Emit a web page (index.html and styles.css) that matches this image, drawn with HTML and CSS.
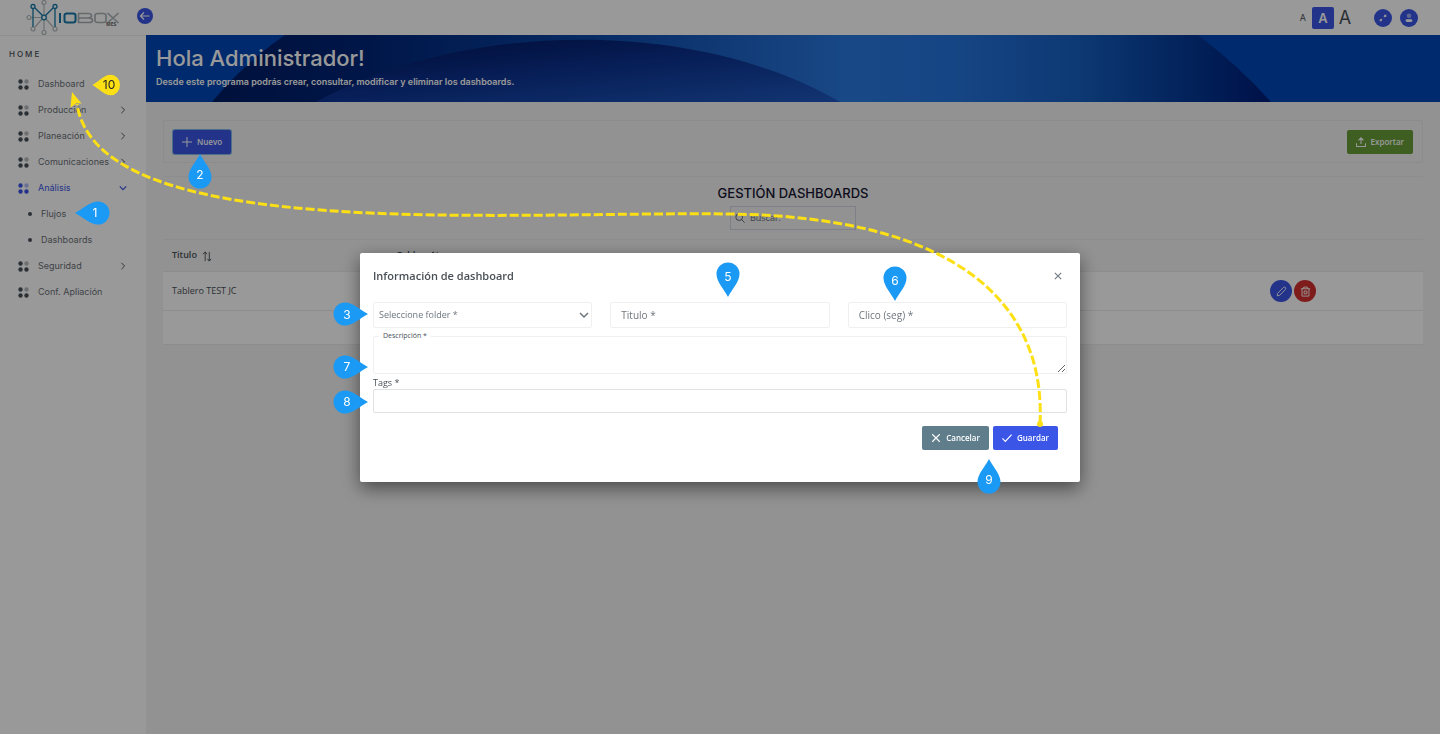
FILE: index.html
```html
<!DOCTYPE html>
<html lang="es">
<head>
<meta charset="utf-8">
<title>Iobox - Dashboards</title>
<link rel="stylesheet" href="styles.css">
</head>
<body>
<svg class="defs" aria-hidden="true">
  <symbol id="grid" viewBox="0 0 10 10"><circle cx="2.3" cy="2.3" r="2"/><circle cx="7.7" cy="2.3" r="2" opacity=".4"/><circle cx="2.3" cy="7.7" r="2"/><circle cx="7.7" cy="7.7" r="2"/></symbol>
  <symbol id="chev" viewBox="0 0 10 10"><path d="M3 1l4 4-4 4" fill="none" stroke="currentColor" stroke-width="1.2"/></symbol>
  <symbol id="down" viewBox="0 0 10 10"><path d="M1 3l4 4 4-4" fill="none" stroke="currentColor" stroke-width="1.5"/></symbol>
  <symbol id="sort" viewBox="0 0 10 12"><path d="M3 11V1M.5 3.5L3 1l2 2.5M7.5 1v10M5.500 8.500L7.500 11l2-2.500" fill="none" stroke="currentColor"/></symbol>
</svg>
<div class="app">
  <header class="topbar">
    <svg class="logo" viewBox="0 0 96 36" role="img" aria-label="Iobox MES">
      <g fill="none" stroke="#b4babd" stroke-width="1.200">
        <path d="M18 5v10M18 20v11M5 17.500h11M16 19L9 27M20 19l7 8"/>
        <circle cx="18" cy="2.500" r="2"/><circle cx="3" cy="17.500" r="2"/><circle cx="7" cy="29" r="2"/><circle cx="18" cy="32.500" r="2"/><circle cx="29" cy="29" r="2"/>
      </g>
      <g fill="none" stroke="#1479a8" stroke-width="1.300">
        <path d="M7 9v18M9 8l8 8M19 16l8-8M29 9v18"/><circle cx="7" cy="6.500" r="2"/><circle cx="29" cy="6.500" r="2"/><circle cx="18" cy="17.500" r="2.300"/>
      </g>
      <path d="M34 13v10M40 13.500h7q2.500 0 2.500 2v5q0 2-2.500 2h-6q-2.500 0-2.500-2v-5q0-2 2.500-2" fill="none" stroke="#1479a8" stroke-width="2"/>
      <path d="M52 13.500h10q3.500 0 3.500 2.200T62 18H53h10q3.500 0 3.500 2.300T63 22.500H52.500V13.500M71 13.500h6q3 0 3 2v5q0 2-3 2h-5q-3 0-3-2v-5q0-2 3-2M81.500 13l11 10M92.500 13l-11 10" fill="none" stroke="#a9b0b4" stroke-width="1.600"/>
      <text x="80" y="26" class="logo-sub">MES</text>
    </svg>
    <button class="round back" aria-label="Ocultar menú"><svg viewBox="0 0 16 16"><path d="M12.500 8h-9M7 4.500L3.500 8 7 11.500" fill="none" stroke="currentColor" stroke-width="1.200"/></svg></button>
    <div class="tools">
      <button class="size s1">A</button><button class="size s2">A</button><button class="size s3">A</button>
      <button class="round full" aria-label="Pantalla completa"><svg viewBox="0 0 16 16"><path d="M5.500 10.500l1.700-1.700M8.800 7.200l1.700-1.700M5.500 9v1.500H7M9 5.500h1.500V7" fill="none" stroke="currentColor" stroke-width=".9"/></svg></button>
      <button class="round" aria-label="Usuario"><svg viewBox="0 0 16 16"><circle cx="8" cy="6" r="2" fill="currentColor" opacity=".5"/><rect x="5" y="9" width="6" height="2.500" rx="1.200" fill="currentColor"/></svg></button>
    </div>
  </header>
  <div class="body">
    <nav class="side">
      <h2>HOME</h2>
      <a href="#"><svg class="gi"><use href="#grid"/></svg><span>Dashboard</span></a>
      <a href="#"><svg class="gi"><use href="#grid"/></svg><span>Producción</span><svg class="ch"><use href="#chev"/></svg></a>
      <a href="#"><svg class="gi"><use href="#grid"/></svg><span>Planeación</span><svg class="ch"><use href="#chev"/></svg></a>
      <a href="#"><svg class="gi"><use href="#grid"/></svg><span>Comunicaciones</span><svg class="ch"><use href="#chev"/></svg></a>
      <a href="#" class="on"><svg class="gi"><use href="#grid"/></svg><span>Análisis</span><svg class="ch"><use href="#down"/></svg></a>
      <a href="#" class="sub"><i></i><span>Flujos</span></a>
      <a href="#" class="sub"><i></i><span>Dashboards</span></a>
      <a href="#"><svg class="gi"><use href="#grid"/></svg><span>Seguridad</span><svg class="ch"><use href="#chev"/></svg></a>
      <a href="#"><svg class="gi"><use href="#grid"/></svg><span>Conf. Apliación</span></a>
    </nav>
    <main>
      <section class="banner">
        <svg class="art" viewBox="0 0 1294 67" preserveAspectRatio="none" aria-hidden="true">
          <defs>
            <linearGradient id="g1"><stop offset="0" stop-color="#001c63"/><stop offset=".15" stop-color="#00267a"/><stop offset=".35" stop-color="#0c46a4"/><stop offset=".6" stop-color="#2a79e0"/><stop offset=".7" stop-color="#2674de"/><stop offset=".82" stop-color="#165fc0"/><stop offset=".92" stop-color="#053a98"/><stop offset="1" stop-color="#001c78"/></linearGradient>
            <linearGradient id="g2" x2=".9" y2="1"><stop offset="0" stop-color="#001358"/><stop offset=".5" stop-color="#0c3290"/><stop offset="1" stop-color="#1d56bc"/></linearGradient>
          </defs>
          <path d="M66 67Q98 28 139 0H1052Q1092 30 1125 67z" fill="url(#g1)"/>
          <path d="M170 67C320 -15 550 -17 694 67z" fill="url(#g2)"/>
        </svg>
        <h1>Hola Administrador!</h1>
        <p>Desde este programa podrás crear, consultar, modificar y eliminar los dashboards.</p>
      </section>
      <div class="content">
        <section class="bar">
          <button class="btn new"><svg viewBox="0 0 12 12"><path d="M6 0v12M0 6h12" fill="none" stroke="currentColor" stroke-width="1.200"/></svg>Nuevo</button>
          <button class="btn export"><svg viewBox="0 0 12 12"><path d="M.6 7.500v3.900h10.800V7.500M6 8.500V1M3 4l3-3 3 3" fill="none" stroke="currentColor" stroke-width="1.300"/></svg>Exportar</button>
        </section>
        <section class="list">
          <div class="caption">
            <h3>GESTIÓN DASHBOARDS</h3>
            <label class="search"><svg viewBox="0 0 12 12"><circle cx="5" cy="5" r="4" fill="none" stroke="currentColor"/><path d="M8 8l3.500 3.500" stroke="currentColor"/></svg><input type="text" placeholder="Buscar." aria-label="Buscar"></label>
          </div>
          <table>
            <thead><tr><th class="c1">Titulo <svg class="so"><use href="#sort"/></svg></th><th>Folder <svg class="so"><use href="#sort"/></svg></th><th class="c3"></th></tr></thead>
            <tbody>
              <tr><td>Tablero TEST JC</td><td></td><td><div class="acts">
                <button class="act" aria-label="Editar"><svg viewBox="0 0 12 12"><path d="M1.300 10.700l.5-2.800 6.400-6.400q1.200-.8 2 0t.2 2.100L4 10.200z" fill="none" stroke="currentColor"/></svg></button>
                <button class="act del" aria-label="Eliminar"><svg viewBox="0 0 12 12"><path d="M1 3h10M4 3V1.200h4V3M2.200 3v8h7.600V3M4.500 5.500h3v3h-3z" fill="none" stroke="currentColor"/></svg></button></div></td></tr>
              <tr class="empty"><td colspan="3"></td></tr>
            </tbody>
          </table>
        </section>
      </div>
    </main>
  </div>
</div>
<div class="mask">
  <form class="modal" role="dialog" aria-labelledby="mt">
    <div class="mhead"><h2 id="mt">Información de dashboard</h2><button type="button" class="x" aria-label="Cerrar"><svg viewBox="0 0 10 10"><path d="M1 1l8 8M9 1L1 9" stroke="currentColor" stroke-width="1.300"/></svg></button></div>
    <div class="row">
      <div class="sel"><select aria-label="Seleccione folder"><option>Seleccione folder *</option></select><svg><use href="#down"/></svg></div>
      <input type="text" placeholder="Titulo *" aria-label="Titulo">
      <input type="text" placeholder="Clico (seg) *" aria-label="Clico (seg)">
    </div>
    <div class="area"><label for="desc">Descripción *</label><textarea id="desc"></textarea></div>
    <label class="tl" for="tags">Tags *</label>
    <input id="tags" class="tags" type="text">
    <div class="foot">
      <button type="button" class="btn cancel"><svg viewBox="0 0 12 12"><path d="M1.500 1.500l9 9M10.500 1.500l-9 9" stroke="currentColor" stroke-width="1.400"/></svg>Cancelar</button>
      <button type="button" class="btn save"><svg viewBox="0 0 12 12"><path d="M.5 6.500l3.500 3.500 7.500-8" fill="none" stroke="currentColor" stroke-width="1.400"/></svg>Guardar</button>
    </div>
  </form>
</div>
<svg class="notes" viewBox="0 0 1440 734">
  <defs><path id="pin" d="M0 -22C4 -14 11.500 -7 11.500 1A11.500 11.500 0 0 1 -11.500 1C-11.500 -7 -4 -14 0 -22z"/></defs>
  <path class="wire" d="M1040 424C1046 306 960 217 730 214S98 244 77 104"/>
  <circle cx="1040" cy="424" r="3" fill="#fce015"/>
  <path d="M72 92l9.500 11.500-5-.5-6 4.500z" fill="#fce015"/>
  <g class="pins">
    <use href="#pin" transform="translate(97 213) rotate(-90)"/>
    <use href="#pin" transform="translate(200 176)"/>
    <use href="#pin" transform="translate(346 314) rotate(90)"/>
    <use href="#pin" transform="translate(728 275) rotate(180)"/>
    <use href="#pin" transform="translate(895 279) rotate(180)"/>
    <use href="#pin" transform="translate(346 367) rotate(90)"/>
    <use href="#pin" transform="translate(346 402) rotate(90)"/>
    <use href="#pin" transform="translate(989 481)"/>
    <use href="#pin" class="y" transform="translate(110 85) scale(.8 .9) rotate(-90)"/>
  </g>
  <g class="nums"><text x="95" y="217">1</text><text x="200" y="179">2</text><text x="347" y="319">3</text><text x="728" y="281">5</text><text x="895" y="285">6</text><text x="347" y="371">7</text><text x="347" y="406">8</text><text x="989" y="484">9</text><text x="109" y="89" class="dark">10</text></g>
</svg>
</body>
</html>
```
FILE: styles.css
```css
* { box-sizing: border-box; }
body { margin: 0; background: #f3f3f3; color: #495057; font: 9px/12px "Open Sans", "Noto Sans", sans-serif; }
button, input, select, textarea { font: inherit; color: inherit; margin: 0; }
button { border: 0; padding: 0; background: none; }
h1, h2, h3, p { margin: 0; }
.defs { position: absolute; width: 0; height: 0; }
.app { display: flex; flex-direction: column; min-height: 100vh; }
.topbar { display: flex; align-items: center; height: 35px; background: #fff; padding: 0 22px 0 26px; }
.logo { width: 96px; height: 36px; }
.logo-sub { font: 700 5px "Open Sans", sans-serif; fill: #666; }
.round { display: flex; width: 18px; height: 18px; border-radius: 50%; background: #3b55e6; color: #fff; }
.round svg { width: 100%; height: 100%; }
.round.back { width: 16px; height: 16px; margin: 0 0 3px 15px; }
.tools { display: flex; align-items: center; margin-left: auto; }
.size { font-family: Inter, sans-serif; color: #495057; }
.s1 { font-size: 9px; padding: 0 6px; }
.s2 { width: 22px; height: 22px; border-radius: 2px; background: #3b55e6; color: #fff; font-size: 13px; font-weight: 600; }
.s3 { font-size: 18px; width: 22px; margin-right: 18px; }
.full { margin-right: 8px; }
.body { display: flex; flex: 1; }
.side { width: 146px; background: #fff; font: 9px/14px Inter, sans-serif; color: #6b7178; padding: 12px 19px 0 18px; border-top: 1px solid #eee; }
.side h2 { font: 500 8px/12px Inter, sans-serif; letter-spacing: 2px; color: #495057; margin: 0 0 11px -9px; }
.side a { display: flex; align-items: center; height: 26px; color: inherit; text-decoration: none; white-space: nowrap; }
.side .gi { width: 11px; height: 11px; margin-right: 9px; fill: #495057; }
.side .ch { width: 8px; height: 8px; margin-left: auto; color: #495057; }
.side .on, .side .on .ch { color: #3b55e6; }
.side .on .gi { fill: #3b55e6; }
.side .sub { padding-left: 10px; }
.side i { width: 4px; height: 4px; border-radius: 50%; background: #495057; margin-right: 9px; }
main { flex: 1; min-width: 0; }
.banner { position: relative; height: 67px; background: #0047b7; color: #fff; padding: 9px 10px; font-family: Inter, sans-serif; }
.art { position: absolute; inset: 0; width: 100%; height: 100%; }
.banner h1, .banner p { position: relative; }
.banner h1 { font-size: 22px; line-height: 28px; font-weight: 500; }
.banner p { font-size: 9px; line-height: 12px; font-weight: 600; margin-top: 4px; }
.content { padding: 18px 17px 0; }
.bar { display: flex; justify-content: space-between; align-items: center; height: 43px; padding: 0 9px; border: 1px solid #e9e9e9; border-radius: 2px; }
.btn { display: flex; align-items: center; justify-content: center; gap: 5px; height: 24px; padding: 0 9px; border-radius: 2px; color: #fff; font-size: 8px; font-weight: 600; }
.btn svg { width: 10px; height: 10px; }
.new { background: #3b55e6; box-shadow: 0 0 0 1px #83b9e6; }
.export { background: #689f38; }
.list { margin-top: 13px; border-top: 1px solid #ebebeb; }
.caption { display: flex; flex-direction: column; align-items: center; height: 62px; padding-top: 7px; }
.caption h3 { font: 500 13px/18px Inter, sans-serif; color: #151530; }
.search { display: flex; align-items: center; gap: 5px; width: 126px; height: 24px; margin-top: 4px; padding: 0 4px; border: 1px solid #d3d5e2; flex: none; }
.search svg { width: 10px; height: 10px; flex: none; }
.search input { width: 100%; min-width: 0; border: 0; padding: 0; background: none; }
table { width: 100%; border-collapse: collapse; table-layout: fixed; }
th { height: 32px; text-align: left; font-weight: 600; padding: 0 9px; border-top: 1px solid #e9ecef; border-bottom: 1px solid #e9ecef; }
.c1 { width: 225px; }
.c3 { width: 325px; }
.so { width: 10px; height: 11px; margin-left: 3px; vertical-align: middle; }
td { height: 39px; padding: 0 9px; background: #fff; border-bottom: 1px solid #e9ecef; }
.empty td { height: 34px; }
.acts { display: flex; gap: 2px; padding-left: 163px; }
.act { display: flex; align-items: center; justify-content: center; width: 22px; height: 22px; border-radius: 50%; background: #3b55e6; color: #fff; }
.act svg { width: 11px; height: 11px; }
.act.del { background: #d32f2f; }
.mask { position: fixed; inset: 0; display: flex; align-items: center; justify-content: center; background: rgba(0, 0, 0, .4); }
.modal { width: 50%; background: #fff; border-radius: 2px; padding: 14px 13px 32px; box-shadow: 0 6px 18px rgba(0, 0, 0, .5); }
.mhead { display: flex; align-items: center; justify-content: space-between; padding-right: 5px; }
.mhead h2 { font-size: 11px; line-height: 18px; font-weight: 600; }
.x { width: 8px; height: 8px; display: flex; color: #6c757d; }
.row { display: grid; grid-template-columns: repeat(3, 1fr); gap: 18px; margin-top: 17px; }
.row input, .row select { width: 100%; height: 26px; border: 1px solid #f0f0f2; border-radius: 2px; background: #fff; }
.row input { padding: 0 10px; font-size: 10px; }
::placeholder { color: #6c757d; opacity: 1; }
.sel { position: relative; color: #6c757d; }
.sel select { appearance: none; padding: 0 5px; }
.sel svg { position: absolute; right: 3px; top: 8px; width: 10px; height: 10px; pointer-events: none; }
.area { position: relative; margin-top: 8px; }
.area label { position: absolute; left: 6px; top: -6px; padding: 0 4px; background: #fff; font-size: 7px; }
.area textarea { display: block; width: 100%; height: 38px; border: 1px solid #f0f0f2; border-radius: 2px; resize: vertical; }
.tl { display: block; margin-top: 3px; }
.tags { display: block; width: 100%; height: 24px; border: 1px solid #dfe2e4; border-radius: 2px; }
.foot { display: flex; justify-content: flex-end; gap: 4px; margin-top: 13px; padding-right: 9px; }
.cancel { background: #607d8b; }
.save { background: #3b55e6; }
.notes { position: fixed; inset: 0; width: 100%; height: 100%; pointer-events: none; }
.wire { fill: none; stroke: #fce015; stroke-width: 3; stroke-dasharray: 9 3; }
.pins { fill: #1a9af5; }
.pins .y { fill: #fce015; }
.nums { font: 12px Inter, sans-serif; fill: #fff; text-anchor: middle; }
.nums .dark { fill: #222; }
```
